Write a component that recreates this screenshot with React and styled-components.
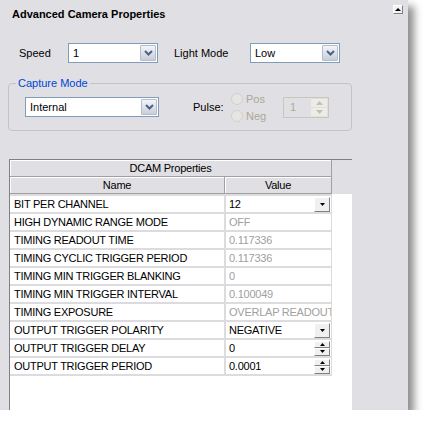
import React from "react";
import styled, { createGlobalStyle } from "styled-components";

const GlobalStyle = createGlobalStyle`
  body {
    margin: 0;
    background: #ffffff;
    font-family: "Liberation Sans", Arial, sans-serif;
  }
`;

const Window = styled.div`
  width: 408px;
  height: 410px;
  background: #e0dfe3;
  box-shadow: 6px 6px 8px rgba(0, 0, 0, 0.45);
  display: flex;
  flex-direction: column;
  font-size: 11px;
  color: #000;
`;

const TitleBar = styled.div`
  height: 28px;
  display: flex;
  justify-content: space-between;
  align-items: center;
  padding: 0 5px 0 12px;
`;

const Title = styled.span`
  font-weight: bold;
  font-size: 11px;
`;

const ScrollButton = styled.div`
  align-self: flex-start;
  margin-top: 5px;
  width: 10px;
  height: 9px;
  box-sizing: border-box;
  background: #f2f2f2;
  border: 1px solid;
  border-color: #ffffff #808080 #808080 #ffffff;
  display: flex;
  align-items: center;
  justify-content: center;
`;

const ControlsRow = styled.div`
  margin-top: 15px;
  height: 20px;
  display: flex;
  align-items: center;
  padding-left: 19px;
`;

const Label = styled.span`
  width: ${(p) => p.$w}px;
  margin-left: ${(p) => p.$ml || 0}px;
  flex-shrink: 0;
`;

const Combo = styled.div`
  width: ${(p) => p.$w}px;
  height: 20px;
  box-sizing: border-box;
  border: 1px solid #7f9db9;
  background: #ffffff;
  display: flex;
  padding: 1px;
  flex-shrink: 0;
`;

const ComboText = styled.span`
  flex: 1;
  padding-left: 3px;
  line-height: 17px;
`;

const ComboButton = styled.div`
  width: 16px;
  box-sizing: border-box;
  border: 1px solid #b4bccf;
  border-radius: 1px;
  background: linear-gradient(#f3f5fa, #c8ceda);
  display: flex;
  align-items: center;
  justify-content: center;
`;

const Group = styled.div`
  position: relative;
  margin: 20px 0 0 8px;
  width: 344px;
  height: 48px;
  box-sizing: border-box;
  border: 1px solid #c5c5c0;
  border-radius: 4px;
  display: flex;
  align-items: center;
  padding-left: 16px;
`;

const Legend = styled.span`
  position: absolute;
  top: -8px;
  left: 7px;
  padding: 0 2px;
  background: #e0dfe3;
  color: #0046d5;
  line-height: 14px;
`;

const RadioColumn = styled.div`
  width: 52px;
  display: flex;
  flex-direction: column;
  gap: 4px;
`;

const RadioRow = styled.div`
  display: flex;
  align-items: center;
  height: 13px;
  color: #aca899;
`;

const RadioCircle = styled.span`
  width: 12px;
  height: 12px;
  box-sizing: border-box;
  border: 1px solid #d2d0c6;
  border-radius: 50%;
  background: #e6e5e3;
  margin-right: 3px;
`;

const Spinner = styled.div`
  width: 46px;
  height: 21px;
  box-sizing: border-box;
  border: 1px solid #c9c7ba;
  display: flex;
  padding: 1px;
`;

const SpinnerText = styled.span`
  flex: 1;
  padding-left: 5px;
  line-height: 17px;
  color: #aca899;
`;

const SpinnerButtons = styled.div`
  width: 16px;
  display: flex;
  flex-direction: column;
  gap: 1px;
`;

const SpinnerHalf = styled.div`
  flex: 1;
  background: #eeede5;
  border-radius: 1px;
  display: flex;
  align-items: center;
  justify-content: center;
`;

const TableArea = styled.div`
  margin: 28px 0 0 9px;
  width: 343px;
  flex: 1;
  box-sizing: border-box;
  border-left: 1px solid #808080;
  border-top: 1px solid #808080;
  background: #ffffff;
  overflow: hidden;
  font-size: 11px;
  letter-spacing: -0.25px;
`;

const HeaderBand = styled.div`
  background: #e0dfe3;
`;

const HeaderRow = styled.div`
  display: flex;
`;

const HeaderCell = styled.div`
  width: ${(p) => p.$w}px;
  height: 17px;
  box-sizing: border-box;
  border-right: 1px solid #a0a0a0;
  border-bottom: 1px solid #a0a0a0;
  box-shadow: inset 1px 1px 0 #ffffff;
  text-align: center;
  line-height: 16px;
`;

const Grid = styled.div`
  width: 322px;
  box-sizing: border-box;
  display: grid;
  grid-template-columns: 214px 105px;
  gap: 2px;
  padding: 2px 1px 2px 0;
  background: #dcdce0;
`;

const Cell = styled.div`
  height: 16px;
  background: #ffffff;
  padding-left: ${(p) => (p.$value ? 3 : 4)}px;
  color: ${(p) => (p.$disabled ? "#a0a0a0" : "#000")};
  display: flex;
  align-items: center;
  justify-content: space-between;
  white-space: nowrap;
  overflow: hidden;
`;

const CellText = styled.span`
  overflow: hidden;
`;

const CellButton = styled.div`
  width: 16px;
  height: 15px;
  box-sizing: border-box;
  flex-shrink: 0;
  margin-right: 1px;
  background: #f0f0f0;
  border: 1px solid;
  border-color: #ffffff #808080 #808080 #ffffff;
  display: flex;
  align-items: center;
  justify-content: center;
`;

const CellSpin = styled.div`
  width: 16px;
  height: 15px;
  flex-shrink: 0;
  margin-right: 1px;
  display: flex;
  flex-direction: column;
`;

const CellSpinHalf = styled.div`
  flex: 1;
  box-sizing: border-box;
  background: #f0f0f0;
  border: 1px solid;
  border-color: #ffffff #808080 #808080 #ffffff;
  display: flex;
  align-items: center;
  justify-content: center;
`;

const Chevron = () => (
  <svg width="9" height="6" viewBox="0 0 9 6">
    <polyline points="1,1 4.5,4.5 8,1" fill="none" stroke="#4d6185" strokeWidth="2" />
  </svg>
);

const Triangle = ({ up, color = "#000", w = 5, h = 3 }) => (
  <svg width={w} height={h} viewBox={`0 0 ${w} ${h}`}>
    <polygon
      points={up ? `0,${h} ${w},${h} ${w / 2},0` : `0,0 ${w},0 ${w / 2},${h}`}
      fill={color}
    />
  </svg>
);

const rows = [
  { name: "BIT PER CHANNEL", value: "12", kind: "drop" },
  { name: "HIGH DYNAMIC RANGE MODE", value: "OFF", disabled: true },
  { name: "TIMING READOUT TIME", value: "0.117336", disabled: true },
  { name: "TIMING CYCLIC TRIGGER PERIOD", value: "0.117336", disabled: true },
  { name: "TIMING MIN TRIGGER BLANKING", value: "0", disabled: true },
  { name: "TIMING MIN TRIGGER INTERVAL", value: "0.100049", disabled: true },
  { name: "TIMING EXPOSURE", value: "OVERLAP READOUT", disabled: true },
  { name: "OUTPUT TRIGGER POLARITY", value: "NEGATIVE", kind: "drop" },
  { name: "OUTPUT TRIGGER DELAY", value: "0", kind: "spin" },
  { name: "OUTPUT TRIGGER PERIOD", value: "0.0001", kind: "spin" },
];

function ComboBox({ width, value }) {
  return (
    <Combo $w={width}>
      <ComboText>{value}</ComboText>
      <ComboButton>
        <Chevron />
      </ComboButton>
    </Combo>
  );
}

export default function App() {
  return (
    <>
      <GlobalStyle />
      <Window>
        <TitleBar>
          <Title>Advanced Camera Properties</Title>
          <ScrollButton>
            <Triangle up w={6} h={3} />
          </ScrollButton>
        </TitleBar>

        <ControlsRow>
          <Label $w={49}>Speed</Label>
          <ComboBox width={90} value="1" />
          <Label $w={76} $ml={16}>
            Light Mode
          </Label>
          <ComboBox width={90} value="Low" />
        </ControlsRow>

        <Group>
          <Legend>Capture Mode</Legend>
          <ComboBox width={134} value="Internal" />
          <Label $w={38} $ml={34}>
            Pulse:
          </Label>
          <RadioColumn>
            <RadioRow>
              <RadioCircle />
              Pos
            </RadioRow>
            <RadioRow>
              <RadioCircle />
              Neg
            </RadioRow>
          </RadioColumn>
          <Spinner>
            <SpinnerText>1</SpinnerText>
            <SpinnerButtons>
              <SpinnerHalf>
                <Triangle up color="#c2c0b6" w={7} h={4} />
              </SpinnerHalf>
              <SpinnerHalf>
                <Triangle color="#c2c0b6" w={7} h={4} />
              </SpinnerHalf>
            </SpinnerButtons>
          </Spinner>
        </Group>

        <TableArea>
          <HeaderBand>
            <HeaderRow>
              <HeaderCell $w={322}>DCAM Properties</HeaderCell>
            </HeaderRow>
            <HeaderRow>
              <HeaderCell $w={215}>Name</HeaderCell>
              <HeaderCell $w={107}>Value</HeaderCell>
            </HeaderRow>
          </HeaderBand>
          <Grid>
            {rows.map((row) => (
              <React.Fragment key={row.name}>
                <Cell>{row.name}</Cell>
                <Cell $value $disabled={row.disabled}>
                  <CellText>{row.value}</CellText>
                  {row.kind === "drop" && (
                    <CellButton>
                      <Triangle />
                    </CellButton>
                  )}
                  {row.kind === "spin" && (
                    <CellSpin>
                      <CellSpinHalf>
                        <Triangle up w={5} h={3} />
                      </CellSpinHalf>
                      <CellSpinHalf>
                        <Triangle w={5} h={3} />
                      </CellSpinHalf>
                    </CellSpin>
                  )}
                </Cell>
              </React.Fragment>
            ))}
          </Grid>
        </TableArea>
      </Window>
    </>
  );
}
